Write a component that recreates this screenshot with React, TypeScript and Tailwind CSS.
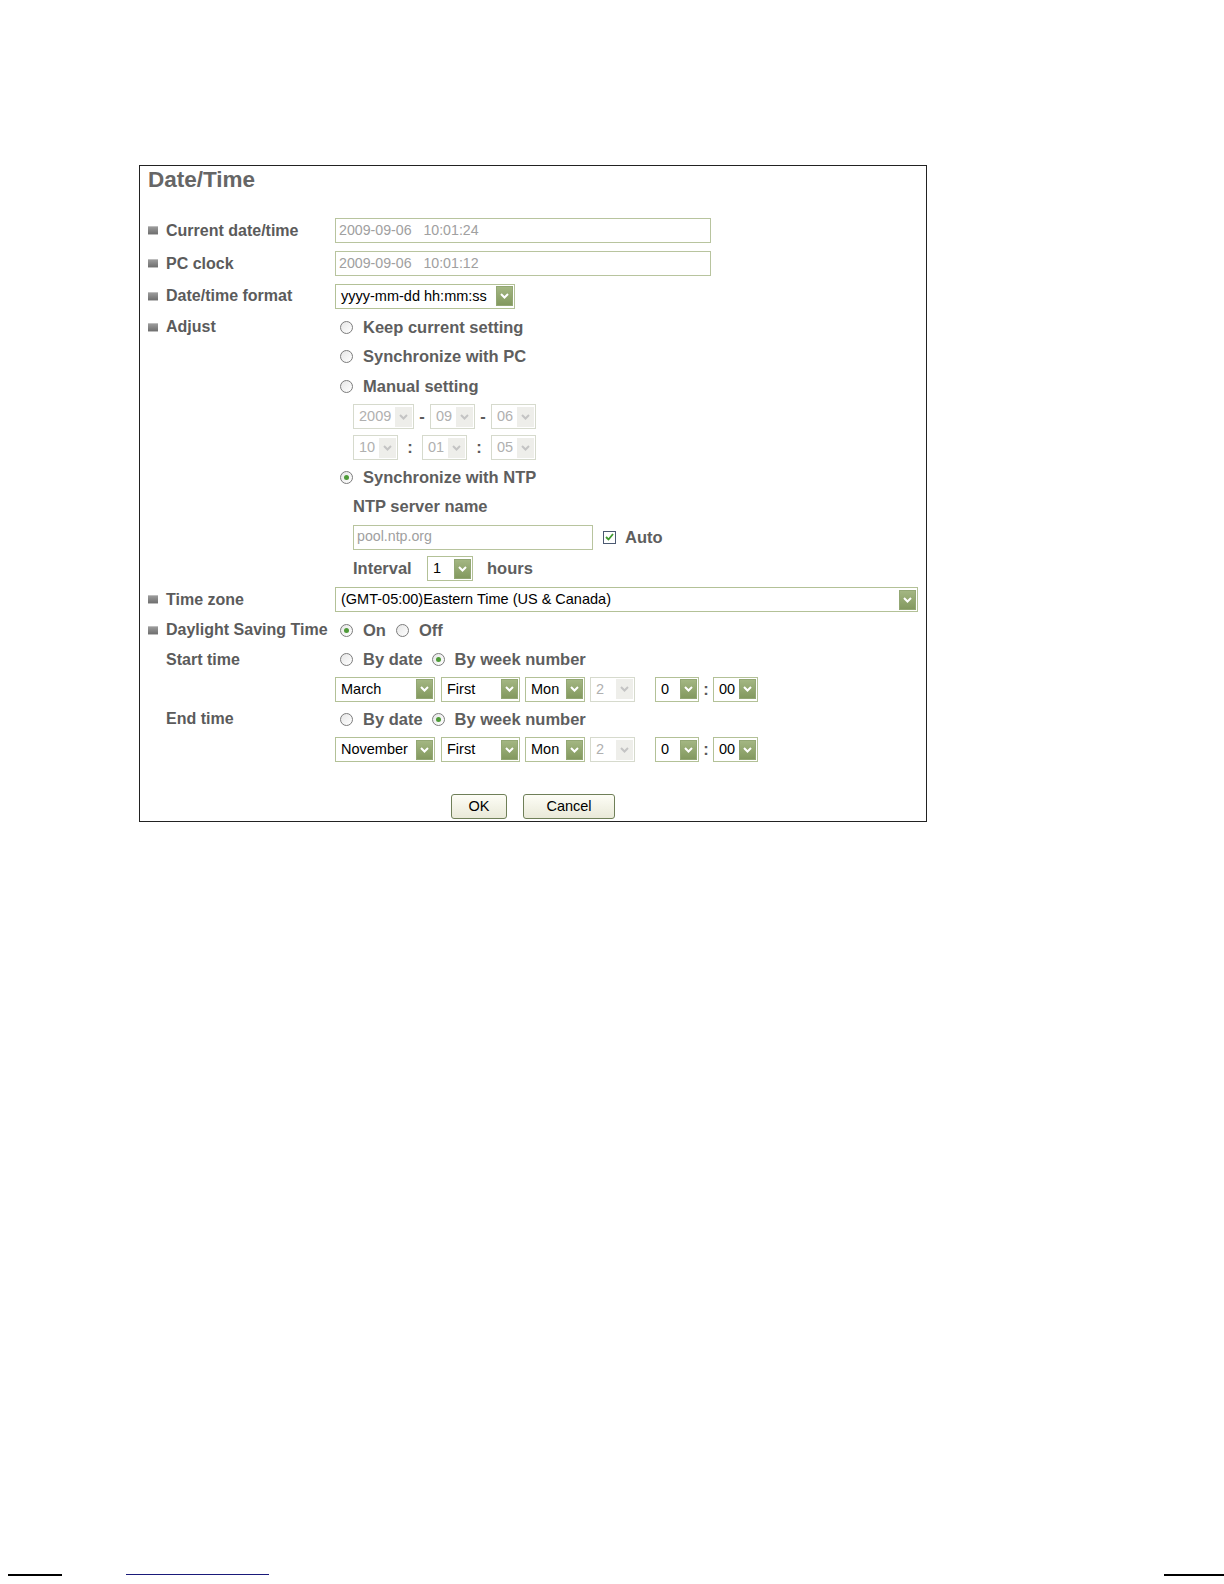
import { ReactNode } from "react";

const Chevron = ({ color }: { color: string }) => (
  <svg width="9" height="6" viewBox="0 0 9 6">
    <path d="M1 1 L4.5 4.5 L8 1" fill="none" stroke={color} strokeWidth="2" />
  </svg>
);

const Select = ({
  value,
  className,
  disabled,
}: {
  value: string;
  className: string;
  disabled?: boolean;
}) => (
  <div
    className={`flex items-center justify-between h-[25px] bg-white border ${
      disabled ? "border-[#d6dacd] text-[#b0b0b0]" : "border-[#b3c197] text-black"
    } ${className}`}
  >
    <span className="pl-[5px] text-[14.5px] leading-none whitespace-pre">{value}</span>
    {disabled ? (
      <span className="flex items-center justify-center w-[17px] h-[20px] mr-px bg-[#eeeeea]">
        <Chevron color="#c4c4c4" />
      </span>
    ) : (
      <span className="flex items-center justify-center w-[17px] h-[20px] mr-px bg-gradient-to-b from-[#a3b682] to-[#83995f] border border-[#93a774]">
        <Chevron color="#ffffff" />
      </span>
    )}
  </div>
);

const TextBox = ({ value, className }: { value: string; className: string }) => (
  <div
    className={`flex items-center h-[25px] bg-white border border-[#b8c49e] pl-[3px] text-[14.2px] text-[#a0a0a0] whitespace-pre ${className}`}
  >
    {value}
  </div>
);

const Radio = ({ checked, label }: { checked?: boolean; label: string }) => (
  <span className="flex items-center">
    <span className="flex items-center justify-center w-[13px] h-[13px] rounded-full border border-[#7c7c7c] bg-gradient-to-br from-[#e6e6e6] to-white">
      {checked && <span className="w-[5px] h-[5px] rounded-full bg-[#4e9a38]" />}
    </span>
    <span className="ml-[10px] text-[16.5px] font-bold text-[#5e5e5e]">{label}</span>
  </span>
);

const Bullet = () => (
  <span className="inline-block w-[10px] h-[9px] bg-gradient-to-b from-[#9a9a9a] to-[#707070] border-y border-[#bdbdbd]" />
);

const Row = ({
  label,
  bullet,
  className,
  children,
}: {
  label?: string;
  bullet?: boolean;
  className: string;
  children?: ReactNode;
}) => (
  <div className={`flex items-center ${className}`}>
    <div className="w-[187px] flex items-center gap-[8px]">
      {bullet ? <Bullet /> : <span className="w-[10px]" />}
      {label && <span className="text-[16px] font-bold text-[#5b5b5b]">{label}</span>}
    </div>
    <div className="flex items-center">{children}</div>
  </div>
);

const Sep = ({ c, className }: { c: string; className: string }) => (
  <span className={`text-center text-[16.5px] font-bold text-[#5b5b5b] ${className}`}>{c}</span>
);

const Text = ({ children, className = "" }: { children: ReactNode; className?: string }) => (
  <span className={`text-[16.5px] font-bold text-[#5e5e5e] ${className}`}>{children}</span>
);

const Button = ({ label, className }: { label: string; className: string }) => (
  <button
    className={`h-[25px] rounded-[3px] border border-[#6f7f58] bg-gradient-to-b from-[#fdfdf6] to-[#e9e9d8] text-[14.5px] text-black ${className}`}
  >
    {label}
  </button>
);

export default function App() {
  return (
    <div className="relative h-[1584px] bg-white font-['Liberation_Sans',Arial,sans-serif] pt-[165px]">
      <div className="ml-[139px] w-[788px] h-[657px] border border-[#222] pl-[8px]">
        <div className="h-[28px] flex items-center text-[22.5px] font-bold text-[#666666]">
          Date/Time
        </div>
        <div className="h-[20px]" />

        <Row bullet label="Current date/time" className="h-[33px]">
          <TextBox value="2009-09-06   10:01:24" className="w-[376px]" />
        </Row>
        <Row bullet label="PC clock" className="h-[33px]">
          <TextBox value="2009-09-06   10:01:12" className="w-[376px]" />
        </Row>
        <Row bullet label="Date/time format" className="h-[32px]">
          <Select value="yyyy-mm-dd hh:mm:ss" className="w-[180px]" />
        </Row>
        <Row bullet label="Adjust" className="h-[30px]">
          <span className="pl-[5px]">
            <Radio label="Keep current setting" />
          </span>
        </Row>
        <Row className="h-[29px]">
          <span className="pl-[5px]">
            <Radio label="Synchronize with PC" />
          </span>
        </Row>
        <Row className="h-[30px]">
          <span className="pl-[5px]">
            <Radio label="Manual setting" />
          </span>
        </Row>
        <Row className="h-[31px]">
          <div className="flex items-center pl-[18px]">
            <Select disabled value="2009" className="w-[61px]" />
            <Sep c="-" className="w-4" />
            <Select disabled value="09" className="w-[45px]" />
            <Sep c="-" className="w-4" />
            <Select disabled value="06" className="w-[45px]" />
          </div>
        </Row>
        <Row className="h-[31px]">
          <div className="flex items-center pl-[18px]">
            <Select disabled value="10" className="w-[45px]" />
            <Sep c=":" className="w-6" />
            <Select disabled value="01" className="w-[45px]" />
            <Sep c=":" className="w-6" />
            <Select disabled value="05" className="w-[45px]" />
          </div>
        </Row>
        <Row className="h-[28px]">
          <span className="pl-[5px]">
            <Radio checked label="Synchronize with NTP" />
          </span>
        </Row>
        <Row className="h-[30px]">
          <Text className="pl-[18px]">NTP server name</Text>
        </Row>
        <Row className="h-[32px]">
          <div className="flex items-center pl-[18px]">
            <TextBox value="pool.ntp.org" className="w-[240px]" />
            <span className="ml-[10px] flex items-center justify-center w-[13px] h-[13px] border border-[#4c5a72] bg-white">
              <svg width="9" height="8" viewBox="0 0 9 8">
                <path d="M1 4 L3.5 6.5 L8 1" fill="none" stroke="#3f9a2e" strokeWidth="1.8" />
              </svg>
            </span>
            <Text className="ml-[9px]">Auto</Text>
          </div>
        </Row>
        <Row className="h-[31px]">
          <div className="flex items-center pl-[18px]">
            <Text className="w-[74px]">Interval</Text>
            <Select value="1" className="w-[46px]" />
            <Text className="ml-[14px]">hours</Text>
          </div>
        </Row>
        <Row bullet label="Time zone" className="h-[31px]">
          <Select value="(GMT-05:00)Eastern Time (US & Canada)" className="w-[583px]" />
        </Row>
        <Row bullet label="Daylight Saving Time" className="h-[30px]">
          <div className="flex items-center gap-[10px] pl-[5px]">
            <Radio checked label="On" />
            <Radio label="Off" />
          </div>
        </Row>
        <Row label="Start time" className="h-[29px]">
          <div className="flex items-center gap-[9px] pl-[5px]">
            <Radio label="By date" />
            <Radio checked label="By week number" />
          </div>
        </Row>
        <Row className="h-[30px]">
          <div className="flex items-center">
            <Select value="March" className="w-[100px]" />
            <Select value="First" className="w-[79px] ml-[6px]" />
            <Select value="Mon" className="w-[60px] ml-[5px]" />
            <Select disabled value="2" className="w-[45px] ml-[5px]" />
            <Select value="0" className="w-[44px] ml-[20px]" />
            <Sep c=":" className="w-[14px]" />
            <Select value="00" className="w-[45px]" />
          </div>
        </Row>
        <Row label="End time" className="h-[30px]">
          <div className="flex items-center gap-[9px] pl-[5px]">
            <Radio label="By date" />
            <Radio checked label="By week number" />
          </div>
        </Row>
        <Row className="h-[31px]">
          <div className="flex items-center">
            <Select value="November" className="w-[100px]" />
            <Select value="First" className="w-[79px] ml-[6px]" />
            <Select value="Mon" className="w-[60px] ml-[5px]" />
            <Select disabled value="2" className="w-[45px] ml-[5px]" />
            <Select value="0" className="w-[44px] ml-[20px]" />
            <Sep c=":" className="w-[14px]" />
            <Select value="00" className="w-[45px]" />
          </div>
        </Row>
        <div className="h-[29px]" />
        <div className="flex justify-center gap-4 pr-[8px]">
          <Button label="OK" className="w-[56px]" />
          <Button label="Cancel" className="w-[92px]" />
        </div>
      </div>

      <div className="absolute left-0 right-0 top-[1574px] flex items-start">
        <div className="ml-[8px] w-[54px] h-[2px] bg-black" />
        <div className="ml-[64px] w-[143px] h-px bg-[#1a1a7a]" />
        <div className="ml-auto w-[60px] h-[2px] bg-black" />
      </div>
    </div>
  );
}
